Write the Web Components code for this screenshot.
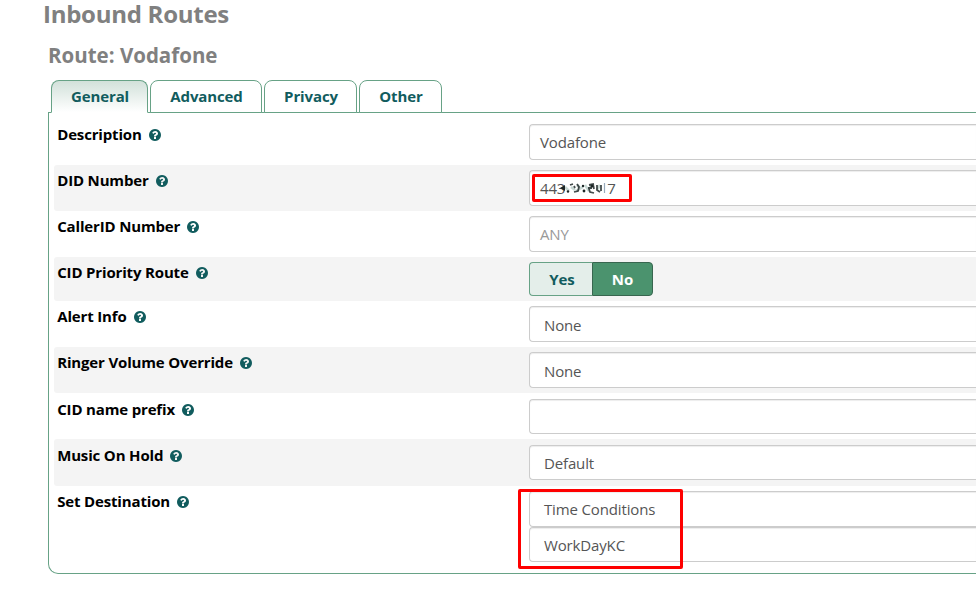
<!DOCTYPE html>
<html lang="en">
<head>
<meta charset="utf-8">
<title>Inbound Routes</title>
<style>
html,body{margin:0;width:976px;height:592px;overflow:hidden;background:#fff;font-family:"Open Sans","Noto Sans",sans-serif;font-size:15px;color:#555}
</style>
</head>
<body>
<route-page></route-page>
<script>
function define(name, html) {
  const t = document.createElement('template');
  t.innerHTML = html;
  customElements.define(name, class extends HTMLElement {
    constructor() {
      super();
      this.attachShadow({mode: 'open'}).appendChild(t.content.cloneNode(true));
    }
  });
}
define('help-icon', `
<style>:host{display:inline-block;width:12px;height:12px;margin:2px 0 0 7px;white-space:normal}svg{display:block}</style>
<svg width="12" height="12" viewBox="0 0 1536 1536"><path fill="#115c5e" d="M896 1248v-192q0-14-9-23t-23-9H672q-14 0-23 9t-9 23v192q0 14 9 23t23 9h192q14 0 23-9t9-23zm256-672q0-88-55.500-163T958 297t-170-41q-243 0-371 213-15 24 8 42l132 100q7 6 19 6 16 0 25-12 53-68 86-92 34-24 86-24 48 0 85.500 26t37.500 59q0 38-20 61t-68 45q-63 28-115.500 86.500T640 892v36q0 14 9 23t23 9h192q14 0 23-9t9-23q0-19 21.500-49.500T972 829q32-18 49-28.500t46-35 44.500-48 28-60.500 12.500-81zm384 192q0 209-103 385.500T1153.500 1433 768 1536t-385.500-103T103 1153.500 0 768t103-385.500T382.500 103 768 0t385.500 103T1433 382.500 1536 768z"/></svg>`);
define('route-tab', `
<style>
:host{display:block;box-sizing:border-box;height:33px;padding:0;border:1px solid #67a286;border-radius:8px 8px 0 0;background:#fff;color:#115c5e;font-weight:700;letter-spacing:-.12px;line-height:30px;text-align:center;text-indent:1px;white-space:nowrap}
:host([active]){background:linear-gradient(#d2e1da,#fff);border-bottom-color:#fff}
</style><slot></slot>`);
define('form-row', `
<style>
:host{display:flex;box-sizing:border-box;height:46px;border-radius:3px 0 0 3px;padding-left:3.2px}
:host([shade]){background:#f4f4f4}
.label{width:471.8px;flex:none;color:#000;font-weight:700;letter-spacing:-.16px;line-height:20px;padding-top:var(--label-top,5px);white-space:nowrap;display:flex;align-items:center;height:20px}
.control{flex:1;padding-top:5px;min-width:0}
</style>
<div class="label"><slot name="label"></slot><help-icon></help-icon></div><div class="control"><slot></slot></div>`);
define('text-field', `
<style>
:host{display:flex;align-items:center;box-sizing:border-box;height:36px;border:1px solid #ccc;border-right:0;border-radius:4px 0 0 4px;background:#fff;box-shadow:inset 0 1px 1px rgba(0,0,0,.075);padding:0 0 1px 10px;color:#555;letter-spacing:-.14px;white-space:nowrap}
:host([select]){padding-left:14px;padding-top:2px}
:host([placeholder]){color:#999}
:host([short]){height:35px}
:host([high]){padding-top:0}
:host([short][high]){padding-top:1px;padding-bottom:0}
</style><slot></slot>`);
define('yes-no', `
<style>
:host{display:inline-flex;height:34px;font-weight:700}
span{box-sizing:border-box;line-height:32px;text-align:center;border:1px solid #67a286}
.y{width:63px;padding-left:2px;background:#e4eeea;color:#115c5e;border-right:0;border-radius:4px 0 0 4px}
.n{width:61px;background:#4b936e;color:#fff;border-color:#38664f;border-radius:0 4px 4px 0}
</style><span class="y">Yes</span><span class="n">No</span>`);
define('redacted-digits', `
<style>:host{display:block;width:47px;height:14px;margin-left:-5px;white-space:normal}svg{display:block}</style>
<svg width="47" height="14" viewBox="0 0 47 14">
<path fill="#fff" d="M5 1h41v12H5z"/>
<g fill="none" stroke="#b9cdc8" stroke-width="2.500" opacity=".8"><path d="M5 6l4 4m2-4l4 3m2-5l4 4m4-4l4 6m3-7l-4 7m12-6l-3 5m-14-3l-7 4"/></g>
<g fill="none" stroke="#222b2c" stroke-width="1.800" opacity=".85"><path d="M10 4l3-1m4 0l2 3-1 4-4 1m0-6l1 2m14-3l5-1m-6 4h4m-3 1l1 3 4 1m-1-9l1 5m3-4v5l3 2m1-7v6"/></g>
<path d="M44.500 2v10" stroke="#9ab" stroke-width="1.200"/>
<g fill="#1c2525"><path d="M0 7l5-3v6z"/><circle cx="8" cy="10.500" r="1.200"/><circle cx="23" cy="5" r="1.200"/><circle cx="24" cy="10" r="1.400"/><circle cx="32" cy="5" r="1.600"/></g></svg>`);
define('red-mark', `
<style>:host{display:block;position:absolute;box-sizing:border-box;border:3px solid #fe0000;border-radius:2px}</style>`);
define('route-page', `
<style>
:host{display:block;position:relative;width:976px;height:592px;overflow:hidden}
h1{margin:0;padding:0 0 0 43px;font-size:24px;line-height:28px;height:40px;color:#808080;font-weight:700;letter-spacing:-.27px}
h2{margin:0;padding:0 0 0 48px;font-size:20.500px;line-height:30px;height:40px;color:#808080;font-weight:700}
nav{display:flex;gap:2px;padding-left:51px;position:relative;z-index:1}
.w1{width:97px}.w2{width:112px}.w3{width:93px}.w4{width:83px}
.panel{box-sizing:border-box;height:462px;margin:-1px 0 0 48px;border:1px solid #67a286;border-right:0;border-radius:0 0 0 10px;padding:6px 0 0 5px}
.r4{height:44px}.r8{height:47px}.low{--label-top:6px}.r9{height:80px}
.drop{margin-top:1px}
.m1{left:532px;top:174px;width:100px;height:28px}
.m2{left:518px;top:489px;width:165px;height:80px}
</style>
<h1>Inbound Routes</h1><h2>Route: Vodafone</h2>
<nav><route-tab class="w1" active>General</route-tab><route-tab class="w2">Advanced</route-tab><route-tab class="w3">Privacy</route-tab><route-tab class="w4">Other</route-tab></nav>
<div class="panel">
<form-row><span slot="label">Description</span><text-field>Vodafone</text-field></form-row>
<form-row shade><span slot="label">DID Number</span><text-field><span>443</span><redacted-digits></redacted-digits><span>7</span></text-field></form-row>
<form-row><span slot="label">CallerID Number</span><text-field placeholder>ANY</text-field></form-row>
<form-row class="r4" shade><span slot="label">CID Priority Route</span><yes-no></yes-no></form-row>
<form-row><span slot="label">Alert Info</span><text-field select>None</text-field></form-row>
<form-row shade><span slot="label">Ringer Volume Override</span><text-field select>None</text-field></form-row>
<form-row class="low"><span slot="label">CID name prefix</span><text-field class="drop" short></text-field></form-row>
<form-row class="r8 low" shade><span slot="label">Music On Hold</span><text-field class="drop" select short high>Default</text-field></form-row>
<form-row class="r9"><span slot="label">Set Destination</span><text-field select high>Time Conditions</text-field><text-field select short high>WorkDayKC</text-field></form-row>
</div>
<red-mark class="m1"></red-mark><red-mark class="m2"></red-mark>`);
</script>
</body>
</html>
